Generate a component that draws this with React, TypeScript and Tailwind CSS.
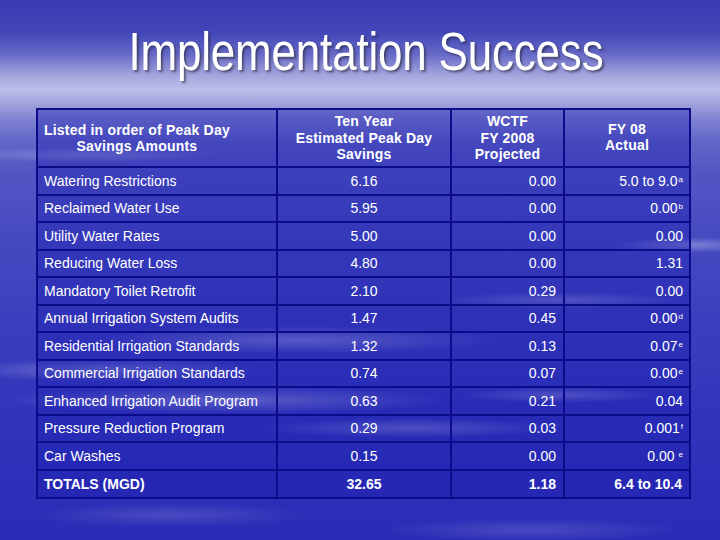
import React from "react";

type Row = {
  name: string;
  est: string;
  wctf: string;
  actual: string;
  note?: string;
  gap?: boolean;
};

const rows: Row[] = [
  { name: "Watering Restrictions", est: "6.16", wctf: "0.00", actual: "5.0 to 9.0", note: "a" },
  { name: "Reclaimed Water Use", est: "5.95", wctf: "0.00", actual: "0.00", note: "b" },
  { name: "Utility Water Rates", est: "5.00", wctf: "0.00", actual: "0.00" },
  { name: "Reducing Water Loss", est: "4.80", wctf: "0.00", actual: "1.31" },
  { name: "Mandatory Toilet Retrofit", est: "2.10", wctf: "0.29", actual: "0.00" },
  { name: "Annual Irrigation System Audits", est: "1.47", wctf: "0.45", actual: "0.00", note: "d" },
  { name: "Residential Irrigation Standards", est: "1.32", wctf: "0.13", actual: "0.07", note: "e" },
  { name: "Commercial Irrigation Standards", est: "0.74", wctf: "0.07", actual: "0.00", note: "e" },
  { name: "Enhanced Irrigation Audit Program", est: "0.63", wctf: "0.21", actual: "0.04" },
  { name: "Pressure Reduction Program", est: "0.29", wctf: "0.03", actual: "0.001", note: "f" },
  { name: "Car Washes", est: "0.15", wctf: "0.00", actual: "0.00", note: "e", gap: true },
];

const cell = "border-2 border-[#0c0c8a] bg-[#1c1eb0]/40 align-middle";

export default function App() {
  return (
    <div className="w-[720px] h-[540px] overflow-hidden flex flex-col font-['Liberation_Sans',Arial,sans-serif] text-white bg-[image:radial-gradient(ellipse_130px_8px_at_90px_155px,rgba(255,255,255,0.25),transparent),radial-gradient(ellipse_80px_8px_at_690px_245px,rgba(255,255,255,0.3),transparent),radial-gradient(ellipse_120px_8px_at_560px_300px,rgba(255,255,255,0.28),transparent),radial-gradient(ellipse_200px_14px_at_300px_340px,rgba(255,255,255,0.35),transparent),radial-gradient(ellipse_150px_12px_at_110px_370px,rgba(255,255,255,0.3),transparent),radial-gradient(ellipse_220px_14px_at_230px_400px,rgba(255,255,255,0.4),transparent),radial-gradient(ellipse_150px_10px_at_410px_428px,rgba(255,255,255,0.3),transparent),radial-gradient(ellipse_100px_8px_at_560px_395px,rgba(255,255,255,0.3),transparent),radial-gradient(ellipse_140px_12px_at_170px_515px,rgba(255,255,255,0.14),transparent),radial-gradient(ellipse_150px_12px_at_530px_530px,rgba(255,255,255,0.14),transparent),linear-gradient(to_bottom,#3a3db3_0%,#4246b8_6%,#6669c6_10%,#a4a5dd_14%,#bdbde8_16.5%,#a9aade_18.5%,#8184d2_22%,#6366c7_26%,#5256c3_32%,#4549c0_45%,#3b3fbe_60%,#3134bb_78%,#2a2cb6_100%)]">
      <div className="pt-[30px] pl-[12px] h-[74px] text-center">
        <h1 className="inline-block text-[44px] leading-[44px] scale-y-120 tracking-[-0.2px] [text-shadow:2px_2px_2px_rgba(40,40,60,0.6)]">
          Implementation Success
        </h1>
      </div>

      <table className="mt-[34px] ml-[36px] w-[653px] border-collapse border-2 border-[#0c0c8a] text-[14px] leading-[16px] table-fixed">
        <colgroup>
          <col className="w-[240px]" />
          <col className="w-[174px]" />
          <col className="w-[113px]" />
          <col className="w-[126px]" />
        </colgroup>
        <thead>
          <tr className="h-[58px] font-bold leading-[16.5px] tracking-[0.2px]">
            <th className={`${cell} pl-[6px] text-left`}>
              <span className="inline-block text-center">
                Listed in order of Peak Day
                <br />
                Savings Amounts
              </span>
            </th>
            <th className={`${cell} text-center`}>
              Ten Year
              <br />
              Estimated Peak Day
              <br />
              Savings
            </th>
            <th className={`${cell} text-center`}>
              WCTF
              <br />
              FY 2008
              <br />
              Projected
            </th>
            <th className={`${cell} text-center pb-[2px]`}>
              FY 08
              <br />
              Actual
            </th>
          </tr>
        </thead>
        <tbody>
          {rows.map((r) => (
            <tr key={r.name} className="h-[27.5px]">
              <td className={`${cell} pl-[6px]`}>{r.name}</td>
              <td className={`${cell} text-center`}>{r.est}</td>
              <td className={`${cell} text-right pr-[7px]`}>{r.wctf}</td>
              <td className={`${cell} text-right pr-[6px]`}>
                {r.actual}
                {r.note && (
                  <sup className={`text-[8px] ${r.gap ? "ml-[4px]" : "ml-[1px]"}`}>{r.note}</sup>
                )}
              </td>
            </tr>
          ))}
          <tr className="h-[28px] font-bold">
            <td className={`${cell} pl-[6px]`}>TOTALS (MGD)</td>
            <td className={`${cell} text-center`}>32.65</td>
            <td className={`${cell} text-right pr-[7px]`}>1.18</td>
            <td className={`${cell} text-right pr-[7px]`}>6.4 to 10.4</td>
          </tr>
        </tbody>
      </table>
    </div>
  );
}
